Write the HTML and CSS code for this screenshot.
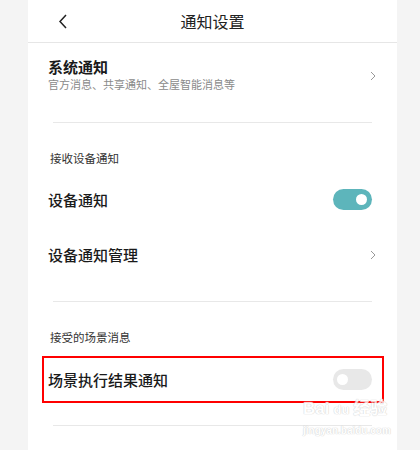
FILE: index.html
```html
<!DOCTYPE html>
<html lang="zh-CN">
<head>
    <meta charset="UTF-8">
    <meta name="viewport" content="width=device-width, initial-scale=1.0">
    <title>通知设置</title>
    <link rel="stylesheet" href="styles.css">
</head>
<body>
    <div class="panel">
        <div class="header">
            <span class="back">
                <svg width="10" height="15" viewBox="0 0 10 15"><path d="M8 1 L2 7.5 L8 14" fill="none" stroke="#222" stroke-width="1.5"/></svg>
            </span>
            <h1>通知设置</h1>
            <span></span>
        </div>

        <div class="item item-system">
            <div class="item-text">
                <div class="item-title bold">系统通知</div>
                <div class="item-sub">官方消息、共享通知、全屋智能消息等</div>
            </div>
            <svg class="arrow" width="6" height="10" viewBox="0 0 6 10"><path d="M1 1 L5 5 L1 9" fill="none" stroke="#999" stroke-width="1"/></svg>
        </div>

        <div class="divider"></div>

        <p class="section-label">接收设备通知</p>
        <div class="item row first">
            <span class="item-title">设备通知</span>
            <span class="switch on"><span class="knob"></span></span>
        </div>
        <div class="item row">
            <span class="item-title">设备通知管理</span>
            <svg class="arrow" width="6" height="10" viewBox="0 0 6 10"><path d="M1 1 L5 5 L1 9" fill="none" stroke="#999" stroke-width="1"/></svg>
        </div>

        <div class="divider"></div>

        <p class="section-label">接受的场景消息</p>
        <div class="item marked">
            <span class="item-title">场景执行结果通知</span>
            <span class="switch"><span class="knob"></span></span>
        </div>

        <div class="divider divider-last"></div>

        <div class="watermark">
            <div class="wm-logo">Bai<span class="wm-du">du</span>经验</div>
            <div class="wm-url">jingyan.baidu.com</div>
        </div>
    </div>
</body>
</html>
```

FILE: styles.css
```css
body {
    margin: 0;
    padding: 0;
    background: #f4f4f4;
    font-family: "Noto Sans CJK SC", "Noto Sans", sans-serif;
    color: #1a1a1a;
}

.panel {
    position: relative;
    margin-left: 28px;
    width: 369px;
    height: 450px;
    background: #fff;
}

.header {
    display: grid;
    grid-template-columns: 1fr auto 1fr;
    align-items: center;
    height: 42px;
    border-bottom: 1px solid #e6e6e6;
}

.back {
    display: flex;
    padding-left: 30px;
}

h1 {
    margin: 0;
    font-size: 16px;
    font-weight: normal;
    line-height: 22px;
    color: #222;
}

.item {
    display: flex;
    align-items: center;
    justify-content: space-between;
    padding: 0 25px 0 20px;
}

.item-system {
    padding-top: 14px;
    padding-bottom: 31px;
}

.item-system .arrow {
    margin-top: 4px;
}

.item-title {
    font-size: 15px;
    line-height: 20px;
    font-weight: 500;
}

.item-title.bold {
    font-weight: bold;
}

.item-sub {
    font-size: 11px;
    line-height: 14px;
    color: #8a8a8a;
}

.arrow {
    margin-right: -4px;
}

.divider {
    height: 1px;
    margin: 0 25px;
    background: #e8e8e8;
}

.section-label {
    margin: 27px 0 0 22px;
    font-size: 11.5px;
    line-height: 16px;
    color: #333;
}

.row {
    height: 55px;
}

.row.first {
    margin-top: 6px;
}

.row + .row + .divider {
    margin-top: 19px;
}

.marked {
    height: 43px;
    margin: 11px 13px 0 14px;
    padding: 0 10px 0 4px;
    border: 2px solid #f00;
}

.divider-last {
    margin-top: 22px;
}

.switch {
    display: flex;
    align-items: center;
    width: 39px;
    height: 21px;
    padding: 0 4px;
    box-sizing: border-box;
    border-radius: 11px;
    background: #e8e8e8;
}

.switch.on {
    justify-content: flex-end;
    padding: 0 5px;
    background: #5db5bb;
}

.knob {
    width: 11px;
    height: 11px;
    border-radius: 50%;
    background: #fff;
}

.watermark {
    position: absolute;
    left: 275px;
    top: 398px;
    color: #fff;
    text-shadow: 0 0 1px #c8c8c8, 0 0 1px #c8c8c8;
    opacity: 0.8;
}

.wm-logo {
    font-family: "Liberation Sans", "Noto Sans CJK SC", sans-serif;
    font-weight: bold;
    font-size: 17px;
    line-height: 22px;
    white-space: nowrap;
}

.wm-du {
    font-size: 13px;
    margin: 0 4px;
}

.wm-url {
    font-family: "Liberation Sans", sans-serif;
    font-weight: bold;
    font-size: 10px;
    line-height: 16px;
    margin-top: 2px;
    white-space: nowrap;
}
```
